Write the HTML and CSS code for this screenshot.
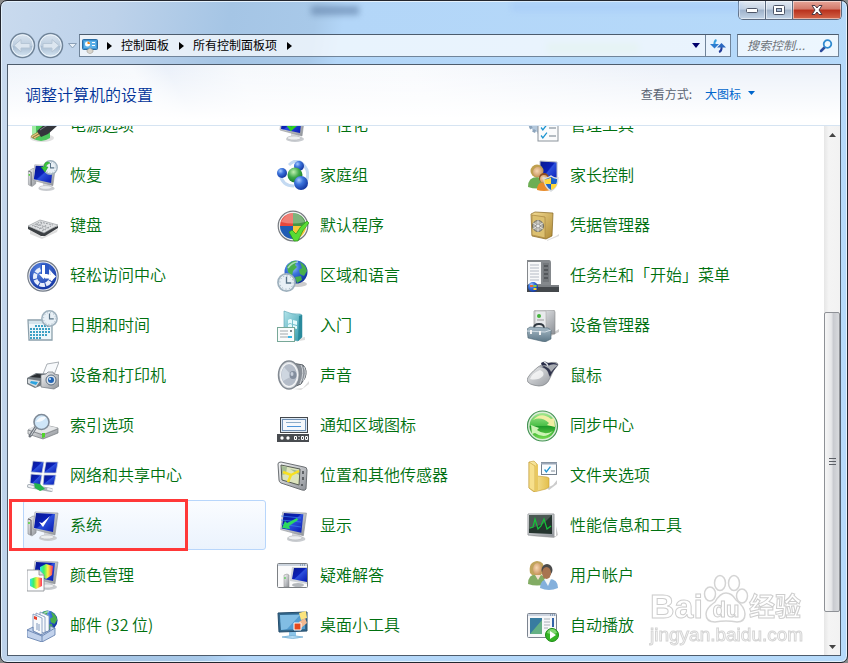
FILE: index.html
```html
<!DOCTYPE html>
<html lang="zh-CN">
<head>
	<meta charset="UTF-8">
	<title>所有控制面板项</title>
	<link rel="stylesheet" href="styles.css">
</head>
<body>
	<!-- 公用渐变和图形 -->
	<svg class="defs" width="0" height="0" aria-hidden="true">
		<defs>
			<linearGradient id="screen" x1="0" y1="0" x2="1" y2="1">
				<stop offset="0" stop-color="#0a1a8c"/><stop offset=".45" stop-color="#0a20b8"/><stop offset=".5" stop-color="#2c50dc"/><stop offset="1" stop-color="#0618b0"/>
			</linearGradient>
			<linearGradient id="silver" x1="0" y1="0" x2="1" y2="1">
				<stop offset="0" stop-color="#f6f7f8"/><stop offset="1" stop-color="#8c9096"/>
			</linearGradient>
			<linearGradient id="steel" x1="0" y1="0" x2="0" y2="1">
				<stop offset="0" stop-color="#a9bcc8"/><stop offset="1" stop-color="#5c7686"/>
			</linearGradient>
			<linearGradient id="gold" x1="0" y1="0" x2="1" y2="1">
				<stop offset="0" stop-color="#f3dc94"/><stop offset="1" stop-color="#b08a34"/>
			</linearGradient>
			<linearGradient id="folder" x1="0" y1="0" x2="1" y2="0">
				<stop offset="0" stop-color="#fbeeb0"/><stop offset="1" stop-color="#e3bf4c"/>
			</linearGradient>
			<linearGradient id="teal" x1="0" y1="0" x2="1" y2="1">
				<stop offset="0" stop-color="#b4e4ea"/><stop offset="1" stop-color="#2e98aa"/>
			</linearGradient>
			<linearGradient id="rainbow" x1="0" y1="0" x2="1" y2="0">
				<stop offset="0" stop-color="#30e0f0"/><stop offset=".3" stop-color="#40f060"/><stop offset=".6" stop-color="#fff040"/><stop offset="1" stop-color="#ff3060"/>
			</linearGradient>
			<linearGradient id="sync" x1="0" y1="0" x2="0" y2="1">
				<stop offset="0" stop-color="#a4e890"/><stop offset=".48" stop-color="#4cc048"/><stop offset=".5" stop-color="#1c9828"/><stop offset="1" stop-color="#74dc50"/>
			</linearGradient>
			<radialGradient id="blueBall" cx=".35" cy=".3" r=".75">
				<stop offset="0" stop-color="#a8ccff"/><stop offset=".4" stop-color="#3c74dc"/><stop offset="1" stop-color="#10329c"/>
			</radialGradient>
			<radialGradient id="greenBall" cx=".4" cy=".3" r=".75">
				<stop offset="0" stop-color="#c0f0b0"/><stop offset=".5" stop-color="#3ca848"/><stop offset="1" stop-color="#127424"/>
			</radialGradient>
			<radialGradient id="access" cx=".4" cy=".3" r=".8">
				<stop offset="0" stop-color="#5c8ae4"/><stop offset="1" stop-color="#0c2c9c"/>
			</radialGradient>
			<radialGradient id="skin" cx=".4" cy=".4" r=".7">
				<stop offset="0" stop-color="#f8d8b4"/><stop offset="1" stop-color="#c08850"/>
			</radialGradient>
			<linearGradient id="navBall" x1="0" y1="0" x2="0" y2="1">
				<stop offset="0" stop-color="#dbe6f1"/><stop offset=".5" stop-color="#bccddf"/><stop offset=".52" stop-color="#a5bad0"/><stop offset="1" stop-color="#dbeaf6"/>
			</linearGradient>
		</defs>
		<symbol id="monitor" viewBox="0 0 32 32">
			<ellipse cx="21" cy="28" rx="9" ry="3" fill="#c9ccd0"/>
			<path d="M17 21l8 2v5q-4 2-8 0z" fill="#d6d8db"/>
			<ellipse cx="20" cy="27" rx="7" ry="2" fill="#eceeef" stroke="#a8abb0" stroke-width=".5"/>
			<path d="M8 2l23 1-3 22-22-6z" fill="url(#silver)" stroke="#8e9298" stroke-width=".6"/>
			<path d="M9 3l19 1-2 18-19-4z" fill="url(#screen)"/>
		</symbol>
		<symbol id="pc" viewBox="0 0 32 32">
			<path d="M1 9l5-3 4 1-1 16-4 3-4-2z" fill="url(#silver)" stroke="#85898e" stroke-width=".6"/>
			<path d="M1 9l3 1v15" fill="none" stroke="#44484c" stroke-width=".8"/>
			<path d="M2 12v2" stroke="#4ad030" stroke-width="1.4"/>
			<use href="#monitor"/>
		</symbol>
		<symbol id="clock" viewBox="0 0 20 20">
			<circle cx="10" cy="10" r="9" fill="#e8f0f6" stroke="#9fb1be" stroke-width="1.8"/>
			<circle cx="10" cy="10" r="7" fill="none" stroke="#8ca0b0" stroke-width="1" stroke-dasharray="1 2.66"/>
			<path d="M10 4v6.500h5" fill="none" stroke="#5a7488" stroke-width="1.400"/>
		</symbol>
		<symbol id="globe" viewBox="0 0 24 24">
			<circle cx="12" cy="12" r="11.500" fill="url(#blueBall)"/>
			<path d="M3 6q5-6 10-5l-2 4 2 2-4 4-1 5-4-4zM16 2q6 3 7 9l-3 5-4-2-1-4 3-2zM11 17l6-1 1 4-5 3z" fill="#48b04c"/>
			<path d="M4 8q4-6 10-6" fill="none" stroke="#e4f8ff" stroke-width="1.500" opacity=".6"/>
		</symbol>
		<symbol id="tick" viewBox="0 0 12 12">
			<path d="M1 6l3 4 7-9" fill="none" stroke="#1c94d0" stroke-width="2.200"/>
		</symbol>
	</svg>

	<div class="window">
		<div class="ghost ghost_text"></div>
		<div class="ghost ghost_tab"></div>
		<div class="ghost ghost_green"></div>

		<div class="titlebar">
			<div class="controls">
				<button class="min" aria-label="最小化"><svg width="14" height="8" viewBox="0 0 14 8"><rect x="1.500" y="2.500" width="11" height="4" rx="1" fill="#fff" stroke="#4e5668"/></svg></button>
				<button class="max" aria-label="最大化"><svg width="14" height="12" viewBox="0 0 14 12"><rect x="1.500" y="1.500" width="11" height="9" rx="1" fill="#fff" stroke="#4e5668"/><rect x="4.500" y="4.500" width="5" height="3" fill="#a9bdd6" stroke="#4e5668"/></svg></button>
				<button class="close" aria-label="关闭"><svg width="14" height="12" viewBox="0 0 14 12"><path d="M2 1.500h3l2 2.500 2-2.500h3L9 6l3 4.500H9L7 8l-2 2.500H2L5 6z" fill="#fff" stroke="#4c3a44"/></svg></button>
			</div>
		</div>

		<div class="nav">
			<div class="history">
				<button aria-label="后退"><svg width="27" height="27" viewBox="0 0 27 27"><circle cx="13.500" cy="13.500" r="12" fill="url(#navBall)" stroke="#6f8398" stroke-width="1.500"/><circle cx="13.500" cy="13.500" r="10.700" fill="none" stroke="#eef5fb"/><path d="M5 13.500l7-6v4h9v4.500h-9v4z" fill="#dce6f0" stroke="#b6c6d6"/></svg></button>
				<button aria-label="前进"><svg width="27" height="27" viewBox="0 0 27 27"><circle cx="13.500" cy="13.500" r="12" fill="url(#navBall)" stroke="#6f8398" stroke-width="1.500"/><circle cx="13.500" cy="13.500" r="10.700" fill="none" stroke="#eef5fb"/><path d="M22 13.500l-7-6v4H6v4.500h9v4z" fill="#dce6f0" stroke="#b6c6d6"/></svg></button>
				<button class="recent" aria-label="最近页面"><svg width="9" height="6" viewBox="0 0 9 6"><path d="M.5.5h8l-4 4.500z" fill="#e8f0f8" stroke="#8ba0b8"/></svg></button>
			</div>
			<div class="address">
				<svg class="cp" width="16" height="16" viewBox="0 0 16 16">
					<rect x=".5" y="1.500" width="15" height="10" rx="1" fill="#3c94d4" stroke="#2a6ca4"/>
					<rect x="2" y="3" width="12" height="7" fill="#5cb0e8"/>
					<circle cx="5.500" cy="6" r="2.500" fill="#fff"/><path d="M5.500 6V3.500A2.500 2.500 0 0 1 8 6z" fill="#f08a20"/>
					<path d="M10 4.500h3M10 7.500h3" stroke="#fff"/>
					<path d="M5 12l3-2 3 2v2l-3 2-3-2z" fill="#d8d4cc" stroke="#96928a" stroke-width=".5"/>
				</svg>
				<svg class="sep" width="5" height="8" viewBox="0 0 5 8"><path d="M0 0l5 4-5 4z"/></svg>
				<a href="#">控制面板</a>
				<svg class="sep" width="5" height="8" viewBox="0 0 5 8"><path d="M0 0l5 4-5 4z"/></svg>
				<a href="#">所有控制面板项</a>
				<svg class="sep" width="5" height="8" viewBox="0 0 5 8"><path d="M0 0l5 4-5 4z"/></svg>
				<button class="drop" aria-label="以前的位置"><svg width="8" height="5" viewBox="0 0 8 5"><path d="M0 0h8L4 5z" fill="#00006c"/></svg></button>
				<button class="refresh" aria-label="刷新"><svg width="16" height="16" viewBox="0 0 16 16"><path d="M6.500 2Q4 3 4.500 7" fill="none" stroke="#36a0e0" stroke-width="2"/><path d="M0 6h9l-4.500 4.500z" fill="#2c7cd0"/><path d="M9 14q3-1 2.500-6" fill="none" stroke="#243c98" stroke-width="2"/><path d="M7 9.500h9L11.500 5z" fill="#2c68c0"/></svg></button>
			</div>
			<div class="search">
				<input type="text" placeholder="搜索控制..." aria-label="搜索控制面板">
				<svg width="14" height="14" viewBox="0 0 14 14"><path d="M6 8L2 12" stroke="#2c4c9c" stroke-width="2.500" stroke-linecap="round"/><circle cx="8.500" cy="5" r="3.800" fill="#eef8ff" stroke="#2f8ad0" stroke-width="1.800"/></svg>
			</div>
		</div>

		<div class="client">
			<div class="header">
				<h1>调整计算机的设置</h1>
				<div class="view">
					<label for="view">查看方式:</label>
					<select id="view">
						<option>大图标</option>
					</select>
					<svg width="7" height="4" viewBox="0 0 7 4"><path d="M0 0h7L3.500 4z" fill="#0066cc"/></svg>
				</div>
			</div>

			<div class="content">
				<div class="list">
					<a class="item" href="#">
						<svg viewBox="0 0 32 32"><ellipse cx="15" cy="28" rx="12" ry="4" fill="#ccc" opacity=".6"/><path d="M5 8h18v20q-9 6-18 0z" fill="#4cc85c"/><path d="M5 8h4v21l-4-1z" fill="#a0eca4"/><path d="M4 26l7-4 1 2-7 4zM7 29l7-4-1-2-7 4z" fill="#e8c880" stroke="#7a5a20" stroke-width=".5"/><path d="M10 21l7-6 13-5v6l-9 8-7 3z" fill="#34363c"/><path d="M13 20l6-4 9-3" stroke="#84888e" fill="none"/></svg>
						<span>电源选项</span>
					</a>
					<a class="item" href="#">
						<svg viewBox="0 0 32 32"><use href="#monitor" x="-3" y="1"/><path d="M7 10l7 9 6-5" stroke="#30d020" stroke-width="3" fill="none"/></svg>
						<span>个性化</span>
					</a>
					<a class="item" href="#">
						<svg viewBox="0 0 32 32"><circle cx="11" cy="14" r="8" fill="#b4c8dc" stroke="#8ca4bc" stroke-width="3" stroke-dasharray="3 2"/><rect x="11" y="5" width="20" height="26" fill="#fafbfc" stroke="#8c949c"/><use href="#tick" x="13" y="14" width="8" height="7"/><use href="#tick" x="13" y="22" width="8" height="7"/><path d="M22 18h7M22 26h7" stroke="#6e7c88"/></svg>
						<span>管理工具</span>
					</a>

					<a class="item" href="#">
						<svg viewBox="0 0 32 32"><use href="#pc" y="3" width="30" height="29"/><use href="#clock" x="16" y="0" width="15" height="15"/><path d="M21 2q-4 0-4 5h-3l4 5 3-5h-2q0-3 4-4z" fill="#3cc83c" stroke="#189020" stroke-width=".5"/></svg>
						<span>恢复</span>
					</a>
					<a class="item" href="#">
						<svg viewBox="0 0 32 32"><path d="M12 5Q22-5 30 10q2 8-2 14M3 14q2 12 14 12" fill="none" stroke="#c4daf2" stroke-width="3"/><circle cx="22" cy="6" r="5" fill="url(#blueBall)"/><circle cx="5" cy="13" r="5" fill="url(#blueBall)"/><circle cx="18" cy="15" r="7.500" fill="url(#greenBall)"/><circle cx="24" cy="23" r="7" fill="url(#blueBall)"/></svg>
						<span>家庭组</span>
					</a>
					<a class="item" href="#">
						<svg viewBox="0 0 32 32"><path d="M13 1l17 1v20l-17-2z" fill="url(#screen)" stroke="#b8bcc4"/><path d="M1 27q0-10 9-10t9 10q-9 3-18 0z" fill="#6cae54"/><circle cx="10" cy="11" r="6.500" fill="#c0a050"/><circle cx="11" cy="12" r="5" fill="url(#skin)"/><path d="M10 30q0-8 7-8t7 8q-7 2-14 0z" fill="#e88c2c"/><circle cx="17" cy="18" r="5" fill="#8e4c20"/><circle cx="17" cy="19" r="4" fill="url(#skin)"/><path d="M24 16q4 3 7 2 0 9-7 13-7-4-7-13 3 1 7-2z" fill="#1c64cc" stroke="#d8dce0" stroke-width="1.500"/><path d="M24 24h6q-1 4-6 6zM24 24h-6q-1-2-.5-5 3 1 6.500-1.500z" fill="#ffd83c"/></svg>
						<span>家长控制</span>
					</a>

					<a class="item" href="#">
						<svg viewBox="0 0 32 32"><path d="M3 20l12 7 16-8-1 3-15 7L3 24z" fill="#bbb" opacity=".5"/><path d="M1 16l14 6 16-6v2l-13 8-4 0L1 19z" fill="#3c4044"/><path d="M1 16l12-6 18 5-14 8z" fill="#dfe1e3" stroke="#8a8e92" stroke-width=".6"/><path d="M5 16l8-4 13 3M8 17l8-4M12 19l8-4M15 21l9-5M9 14l13 4M7 16l12 4" stroke="#9a9ea2" stroke-dasharray="2 1" fill="none"/></svg>
						<span>键盘</span>
					</a>
					<a class="item" href="#">
						<svg viewBox="0 0 32 32"><circle cx="16" cy="16" r="14.800" fill="#f0f1f2" stroke="#777b80" stroke-width="1.200"/><path d="M16 16H3A13 13 0 0 1 16 3z" fill="#e8483c"/><path d="M16 16V3A13 13 0 0 1 29 16z" fill="#469444"/><path d="M16 16V29A13 13 0 0 1 3 16z" fill="#205cb4"/><path d="M16 16V29A13 13 0 0 0 29 16z" fill="#f8c838"/><path d="M4 12q5-9 12-9t12 9q-12 3-24 0z" fill="#fff" opacity=".3"/><path d="M12 22l3-2 4 4q4-8 11-13l2 2q-7 7-11 18h-4z" fill="#58dc34" stroke="#289018" stroke-width=".7"/></svg>
						<span>默认程序</span>
					</a>
					<a class="item" href="#">
						<svg viewBox="0 0 32 32"><path d="M20 30l9-4 3-2v2l-12 5z" fill="#ddd"/><path d="M4 4l4-2 18 1-1 23-6 3L5 26z" fill="url(#gold)" stroke="#846420" stroke-width=".7"/><path d="M5 5l13 2v21L5 25z" fill="#dcc070" stroke="#a68440" stroke-width=".7"/><circle cx="11" cy="16" r="5.500" fill="#b4b2a8" stroke="#6c6a60"/><circle cx="11" cy="16" r="2" fill="#e4e4e0" stroke="#666"/><path d="M11 10v12M6 13l10 6M6 19l10-6" stroke="#eee" stroke-width=".8"/></svg>
						<span>凭据管理器</span>
					</a>

					<a class="item" href="#">
						<svg viewBox="0 0 32 32"><circle cx="16" cy="16" r="15.200" fill="#f0f2f4" stroke="#747c88" stroke-width="1.200"/><circle cx="16" cy="16" r="13.500" fill="url(#access)"/><circle cx="16" cy="17" r="8" fill="none" stroke="#e8eefc" stroke-width="4" stroke-dasharray="5.300 1" stroke-dashoffset="2"/><path d="M14 4h8v11h-8z" fill="#2c58c4"/><path d="M15 5h3v9h3l-4.500 5L12 14h3z" fill="#fff"/><path d="M18 14.500h6v-3l5 5-5 5v-3h-6z" fill="#fff"/></svg>
						<span>轻松访问中心</span>
					</a>
					<a class="item" href="#">
						<svg viewBox="0 0 32 32"><ellipse cx="21" cy="24" rx="9" ry="3" fill="#ccc"/><use href="#globe" x="7" y="0" width="24" height="24"/><use href="#clock" x="0" y="13" width="19" height="19"/></svg>
						<span>区域和语言</span>
					</a>
					<a class="item" href="#">
						<svg viewBox="0 0 32 32"><path d="M0 0h22q2 0 2 3v22H0z" fill="#84888c"/><rect x="1" y="2" width="13" height="22" fill="#f8f9fa"/><path d="M3 5h9M3 8h9M3 11h9M3 14h9M3 17h9M3 20h9" stroke="#b4bac4"/><path d="M16 3h6v19h-6z" fill="#74787c"/><path d="M17 6h4M17 10h4M17 14h4M17 18h4" stroke="#54585c" stroke-width="2"/><path d="M0 25h32v7H0z" fill="#44484c"/><path d="M10 25h22v2H10z" fill="#7c8084"/><circle cx="6" cy="27" r="5" fill="url(#blueBall)"/><path d="M3 25h3v2H3z" fill="#f06830"/><path d="M6.500 25h3v2h-3z" fill="#80d040"/><path d="M6.500 28h3v2h-3z" fill="#ffd030"/></svg>
						<span>任务栏和「开始」菜单</span>
					</a>

					<a class="item" href="#">
						<svg viewBox="0 0 32 32"><path d="M1 10h24v20H2z" fill="#eef6fa" stroke="#8ca0ac" stroke-width="1.300"/><path d="M2 11h22v3H2z" fill="#d4e4ec"/><path d="M8 16h15M3 19h20M3 22h20M3 25h17M3 28h11" stroke="#3ca0c4" stroke-width="2" stroke-dasharray="2 1"/><use href="#clock" x="14" y="0" width="17" height="17"/></svg>
						<span>日期和时间</span>
					</a>
					<a class="item" href="#">
						<svg viewBox="0 0 32 32"><path d="M23 28l5-1v3l-6 1z" fill="#ddd"/><path d="M7 1q8 4 16 3l2 1v22l-4 4-14-3z" fill="url(#teal)" stroke="#50a0b0" stroke-width=".6"/><path d="M22 6l3-1v22l-4 4z" fill="#2a8a9c"/><path d="M11 10q3-2 4 0v4q-2-2-4 0zM16 10l4 1v4l-4-1zM11 15q3-2 4 0v3q-2-2-4 0zM16 15l4 1v3l-4-1z" fill="#e4fafc"/><rect x=".5" y="17.500" width="17" height="14" fill="#fafcfc" stroke="#78a898"/><path d="M3 21h8M3 24h8M3 27h8" stroke="#a0a8ac"/><path d="M11 27h4" stroke="#38b4e4" stroke-width="2"/><path d="M13 21h2" stroke="#7c8890" stroke-width="2"/></svg>
						<span>入门</span>
					</a>
					<a class="item" href="#">
						<svg viewBox="0 0 32 32"><path d="M24 24l8-5v3l-8 4z" fill="#ccc"/><path d="M7 1l2-1h18l1 2v22H7z" fill="url(#silver)" stroke="#888" stroke-width=".6"/><path d="M8 1h11v22H8z" fill="#e8eaec" stroke="#aaa" stroke-width=".6"/><circle cx="12" cy="6" r="2" fill="#44b43c"/><path d="M10 10h7" stroke="#999"/><path d="M7 18q0-4 5-4t5 4" fill="none" stroke="#303840" stroke-width="1.800"/><path d="M0 19l3-2 18 1 3 2v9l-6 3L1 28z" fill="url(#steel)" stroke="#4c6472" stroke-width=".6"/><path d="M0 21l18 1 6-2" stroke="#d0dce4" fill="none"/><path d="M4 20v4M13 21v4" stroke="#f4f4f4" stroke-width="2"/></svg>
						<span>设备管理器</span>
					</a>

					<a class="item" href="#">
						<svg viewBox="0 0 32 32"><path d="M16 14L20 4l12-2-5 13z" fill="#f8fafc" stroke="#969ca2" stroke-width=".8"/><path d="M0 18l9-5 14 1-5 10-10 4-8-4z" fill="#747c82"/><path d="M3 17l7-3 10 1-5 3z" fill="#292d31"/><path d="M1 19l12 2-4 6-8-4z" fill="#d7dce0"/><path d="M4 21l7 1-2 3-6-2z" fill="#2ca4e0"/><path d="M14 15l5-1 2-2h5l1 2 5 1v11l-5 3-13-2z" fill="url(#silver)" stroke="#6e757c" stroke-width=".7"/><circle cx="24" cy="20" r="5" fill="#dfe6ec" stroke="#5c6e80"/><circle cx="24" cy="20" r="3" fill="#2464b4"/><circle cx="23" cy="19" r="1" fill="#c8f0ff"/></svg>
						<span>设备和打印机</span>
					</a>
					<a class="item" href="#">
						<svg viewBox="0 0 32 32"><path d="M16 29l10-1 6-7v3l-8 6z" fill="#ddd"/><path d="M15 3l11 2q5 5 2 13l-4 6-10 4z" fill="#8a9098" stroke="#5c6268"/><path d="M24 5q4 7-1 19M27 7q3 6-1 14" stroke="#d0d4d8" fill="none"/><ellipse cx="12" cy="15" rx="10.500" ry="14" fill="#d7dbe0" stroke="#838a92" stroke-width="1.500"/><ellipse cx="12" cy="15" rx="8.500" ry="11.500" fill="#b4bcc8" stroke="#f4f5f6" stroke-width="1.200"/><path d="M15 16L7 7q-4 7-1 14z" fill="#ced6e0"/><ellipse cx="16" cy="15" rx="3.500" ry="4" fill="#838e9e"/><ellipse cx="15" cy="14" rx="1.500" ry="2" fill="#c8d0dc"/></svg>
						<span>声音</span>
					</a>
					<a class="item" href="#">
						<svg viewBox="0 0 32 32"><path d="M0 20q1-5 11-13 5-4 11-4 9-2 9 2-5 5-8 13-3 8-11 8-11-1-12-6z" fill="url(#silver)" stroke="#777b80" stroke-width=".7"/><path d="M14 3q4-3 7 0 8-1 10 2-6 4-9 9-1-6-7-8z" fill="#282c48"/><path d="M11 7q10 1 11 9 4-7 9-11-6-2-10 1-4-2-10 1z" fill="#a8acb2"/><path d="M22 15q-1-6-7-8l2-1q6 2 7 6 3-4 7-7-6 7-8 12z" fill="#30344c"/><path d="M17 2q3 1 4 4" stroke="#d8dce0" fill="none" stroke-width="1.500"/><path d="M3 19q2-6 10-9 5 2 3 6-5 5-13 3z" fill="#fff" opacity=".7"/></svg>
						<span>鼠标</span>
					</a>

					<a class="item" href="#">
						<svg viewBox="0 0 32 32"><path d="M1 20l12-6 18 4v5l-15 6-15-5z" fill="url(#silver)" stroke="#777b80" stroke-width=".7"/><path d="M1 19l12-5 18 4-15 6z" fill="#e4e6e8"/><path d="M1 20l15 5v4M16 25l15-6" stroke="#8c9094" fill="none"/><path d="M15 23h3v4l-3 1z" fill="#50d428"/><path d="M9 17l-6 9" stroke="#6e747c" stroke-width="3" stroke-linecap="round"/><path d="M9 17l-5 8" stroke="#d4d8dc" stroke-linecap="round"/><circle cx="14.500" cy="12" r="7.500" fill="#cfe6f8" stroke="#7f8b98" stroke-width="1.600"/><path d="M9 12q3-6 10-5-2 5-10 5z" fill="#fff" opacity=".8"/></svg>
						<span>索引选项</span>
					</a>
					<a class="item" href="#">
						<svg viewBox="0 0 32 32"><rect x="3.500" y="7.500" width="27" height="15" fill="#dce8f4" stroke="#44484c"/><rect x="5.500" y="9.500" width="23" height="11" fill="#f4f8fc" stroke="#7090b4"/><path d="M9 12.500h15" stroke="#8cacc8"/><path d="M10 16.500h14" stroke="#4c94d8"/><path d="M0 24h32v8H0z" fill="#484c50"/><circle cx="5" cy="28" r="1.700" fill="#fff"/><circle cx="11" cy="28" r="1.700" fill="#fff"/><path d="M17.500 26.500h2v3h-2zM24.500 26.500h2v3h-2zM28.500 26.500h2v3h-2zM22 26v1M22 29v1" stroke="#fff" fill="none"/></svg>
						<span>通知区域图标</span>
					</a>
					<a class="item" href="#">
						<svg viewBox="0 0 32 32"><circle cx="15.500" cy="16" r="15" fill="#dcecd8" stroke="#449454" stroke-width="1.200"/><circle cx="15.500" cy="16" r="13" fill="url(#sync)"/><path d="M6 10Q14 1 24 9l3-1 1 9-8-2 2-2Q14 6 6 10z" fill="#f0eea4"/><path d="M26 21Q18 30 8 23l-3 1-1-9 8 3-2 2q8 6 16 1z" fill="#ccf4b4"/></svg>
						<span>同步中心</span>
					</a>

					<a class="item" href="#">
						<svg viewBox="0 0 32 32"><g fill="url(#screen)" stroke="#c8d0dc" stroke-width=".8"><path d="M6 1l11 1-2 11-11-1z"/><path d="M19 2h12l-2 11H17z"/><path d="M4 14l11 1-2 11-10-3z"/><path d="M17 15h12l-2 10H16z"/></g><path d="M2 26l22 4" stroke="#a8b0b8" stroke-width="4" stroke-linecap="round"/><path d="M2 26l4 1M21 29l4 1" stroke="#f0f2f4" stroke-width="2" stroke-linecap="round"/><path d="M7 23l6 1 5 5-5 2-5-3z" fill="#24b44c"/></svg>
						<span>网络和共享中心</span>
					</a>
					<a class="item" href="#">
						<svg viewBox="0 0 32 32"><path d="M1 4q0-2 3-2l23 5q3 0 3 3l-1 19q-1 2-4 1L4 23q-2-1-2-3z" fill="url(#silver)" stroke="#6c7074"/><path d="M4 5l19 4-1 16-17-5z" fill="#dce4bc" stroke="#565c54"/><path d="M5 6l5 1-1 7-4 1zM13 9l9 2v4z" fill="#a4bc94"/><path d="M6 12l8 3 8-4M14 15l-3 7" stroke="#f8e020" stroke-width="2.500" fill="none"/><path d="M26 11v3M26 17v3M25 24v2" stroke="#44484c" stroke-width="1.500"/></svg>
						<span>位置和其他传感器</span>
					</a>
					<a class="item" href="#">
						<svg viewBox="0 0 32 32"><path d="M20 28l6-3 4-5v4l-8 6z" fill="#ccc"/><path d="M2 2l5-1 3 3v12l10 1 2 1v9l-3 2-8 2-4 1-5-4z" fill="url(#folder)" stroke="#c49c34" stroke-width=".6"/><path d="M2 2l6 4v26l-6-4z" fill="#f7e08c" stroke="#c49c34" stroke-width=".6"/><path d="M8 6l3-2v26l-3 2z" fill="#e8c860"/><rect x="14.500" y="2.500" width="15" height="12" fill="#fafcfe" stroke="#74808c"/><path d="M14 3.500h16" stroke="#9ca8b8" stroke-width="2"/><use href="#tick" x="17" y="6" width="7" height="7"/><path d="M24 11h4" stroke="#84909c"/></svg>
						<span>文件夹选项</span>
					</a>

					<a class="item current" href="#">
						<svg viewBox="0 0 32 32"><use href="#pc"/><path d="M12 12l4 5 7-11-8 7z" fill="#fff"/></svg>
						<span>系统</span>
						<i class="mark"></i>
					</a>
					<a class="item" href="#">
						<svg viewBox="0 0 32 32"><use href="#monitor" x="-3" width="34" height="33"/><path d="M4 6l20 2M4 10l20 2M4 14l20 3" stroke="#3c80f0" opacity=".7"/><path d="M5 18l3-7 2 2 10-5 1 2-9 6 1 3z" fill="#2cd860"/></svg>
						<span>显示</span>
					</a>
					<a class="item" href="#">
						<svg viewBox="0 0 32 32"><path d="M3 26h26V16l2 9-4 3z" fill="#ccc"/><path d="M1 4h26v23L1 25z" fill="url(#silver)" stroke="#9c9fa2"/><path d="M2 5h23v19L2 23z" fill="#24342e"/><path d="M2 5h23l-9 9-14 5z" fill="#fff" opacity=".18"/><path d="M3 18l3-1 2-8 3 10 3-3 3-7 3 10 4-3" stroke="#14c438" fill="none" stroke-width="1.200"/></svg>
						<span>性能信息和工具</span>
					</a>

					<a class="item" href="#">
						<svg viewBox="0 0 32 32"><use href="#monitor" x="0" y="-1"/><path d="M13 7l6-3 7 2-1 9-6 4-6-4z" fill="url(#rainbow)"/><path d="M0 10h12l5 5v16H0z" fill="#fcfcfd" stroke="#84888e" stroke-width=".8"/><path d="M12 10v5h5" fill="#dde0e4" stroke="#84888e" stroke-width=".8"/><path d="M3 19l6-2 6 1v8l-6 3-6-3z" fill="url(#rainbow)"/></svg>
						<span>颜色管理</span>
					</a>
					<a class="item" href="#">
						<svg viewBox="0 0 32 32"><rect x=".5" y="3.500" width="30" height="24" rx="1" fill="#fafafb" stroke="#7c8084"/><path d="M1 5h29" stroke="#ccd4de" stroke-width="2"/><path d="M23 5h6" stroke="#54789c" stroke-dasharray="1 1"/><path d="M7 15l3-1 2 1v12H7z" fill="url(#silver)" stroke="#888" stroke-width=".5"/><path d="M8 17v2" stroke="#3c3"/><path d="M15 7h15v17l-17-3z" fill="#d0d4d8"/><path d="M17 8h13v14l-15-3z" fill="url(#screen)"/><ellipse cx="21" cy="25" rx="6" ry="2" fill="#b4b8bc"/></svg>
						<span>疑难解答</span>
					</a>
					<a class="item" href="#">
						<svg viewBox="0 0 32 32"><path d="M1 24q0-10 9-10t9 10q-9 3-18 0z" fill="#82ac64"/><path d="M3 13Q1 2 10 1q8 0 7 10l-3 4H5z" fill="#c0a45c"/><ellipse cx="10.500" cy="9" rx="4.500" ry="6" fill="url(#skin)"/><path d="M8 15l3 5 3-5z" fill="#f4e0cc"/><path d="M13 28q0-9 9-9t9 9q-9 4-18 0z" fill="#84b0dc"/><ellipse cx="20" cy="10" rx="5.500" ry="6" fill="#4a4a4a"/><ellipse cx="19.500" cy="13" rx="4.500" ry="6" fill="#a87450"/><path d="M17 19l4 7 3-7z" fill="#f4f6f8"/></svg>
						<span>用户帐户</span>
					</a>

					<a class="item" href="#">
						<svg viewBox="0 0 32 32"><use href="#globe" x="10" y="0" width="21" height="21"/><g fill="#f8fafd" stroke="#7a92b8" stroke-width=".8"><path d="M13 2l9 4v16l-9-2z"/><path d="M9 3l9 4v16l-9-2z"/><path d="M6 4l9 4v17l-9-4z"/></g><path d="M7 6l3 1v3L7 9z" fill="#e8402c"/><path d="M10 13v7M12 14v7" stroke="#8098bc"/><path d="M0 20l6-3v4l8 4 9-5v-4l5 2v7l-13 7L0 27z" fill="#c2d2ec" stroke="#5c78a8" stroke-width=".8"/><path d="M0 20l15 6 13-8M15 26v6" fill="none" stroke="#5c78a8" stroke-width=".8"/></svg>
						<span>邮件 (32 位)</span>
					</a>
					<a class="item" href="#">
						<svg viewBox="0 0 32 32"><path d="M12 22h7v5h-7z" fill="#8cc4e8"/><path d="M5 27q10-3 21 0-10 3-21 0z" fill="#b4dcf4" stroke="#6ca8d0" stroke-width=".7"/><path d="M1 3l29-1v19L2 22z" fill="#34688c" stroke="#244c6c"/><path d="M3 5l25-1v15L4 20z" fill="#549cd0"/><path d="M3 5h20L10 19l-6 1z" fill="#94ccec" opacity=".7"/><path d="M22 3l7-2 1 7-6 2z" fill="#fce47c"/><path d="M22 12l6-4 2 5-6 5z" fill="#f4b890"/><path d="M17 13h7v7h-7z" fill="#e4481c" stroke="#fff"/></svg>
						<span>桌面小工具</span>
					</a>
					<a class="item" href="#">
						<svg viewBox="0 0 32 32"><rect x=".5" y="3.500" width="29" height="24" rx="1" fill="#f6f7f9" stroke="#7c8490"/><path d="M1 5h28" stroke="#ccd4e0" stroke-width="2"/><path d="M23 5h6" stroke="#4c6c94" stroke-dasharray="1 1"/><path d="M3 8h12v16H3z" fill="#387ca0"/><path d="M3 24l12-14v14z" fill="#64b084"/><path d="M17 9h6M17 12h6M17 15h6M17 18h4" stroke="#a8b0b8"/><path d="M26 8v9" stroke="#3464a8" stroke-width="2"/><circle cx="25" cy="25" r="6.500" fill="#34b424" stroke="#1c8c14"/><path d="M20 23q1-4 5-4t5 4q-5 2-10 0z" fill="#b0eca0" opacity=".6"/><path d="M23 21l6 4-6 4z" fill="#fff"/></svg>
						<span>自动播放</span>
					</a>
				</div>

				<div class="scrollbar">
					<button aria-label="向上滚动"><svg width="7" height="4" viewBox="0 0 7 4"><path d="M0 4h7L3.500 0z" fill="#444"/></svg></button>
					<div class="track">
						<div class="thumb"><i></i><i></i><i></i></div>
					</div>
					<button aria-label="向下滚动"><svg width="7" height="4" viewBox="0 0 7 4"><path d="M0 0h7L3.500 4z" fill="#444"/></svg></button>
				</div>
			</div>
		</div>

		<div class="watermark">
			<div class="brand">
				<span class="bai">Bai</span>
				<span class="paw">
					<svg width="46" height="49" viewBox="0 0 46 49"><g fill="#fff" stroke="#d0d0d0" stroke-width="1.500"><ellipse cx="7" cy="20" rx="5.500" ry="7"/><ellipse cx="17" cy="9" rx="5.500" ry="7.500"/><ellipse cx="31" cy="9" rx="5.500" ry="7.500"/><ellipse cx="39" cy="22" rx="5.500" ry="7"/><path d="M23 19q6 0 10 7 9 7 9 14 0 8-8 8-11-2-22 0-9 0-9-8 0-6 9-12 5-9 11-9z"/></g></svg>
					<b>du</b>
				</span>
				<span class="jy">经验</span>
			</div>
			<div class="url">jingyan.baidu.com</div>
		</div>
	</div>
</body>
</html>
```
FILE: styles.css
```css
*{padding:0;margin:0;box-sizing:border-box;}
body{
	background:#8a8a8a;
	font-family:"Noto Sans CJK SC","Liberation Sans",sans-serif;
	font-size:12px;
	color:#000;
}
button{
	border:0;
	background:none;
	display:flex;
	align-items:center;
	justify-content:center;
	cursor:pointer;
}
svg{
	display:block;
	flex:none;
}
a{
	text-decoration:none;
	color:inherit;
}
.defs{
	position:absolute;
}
.window{
	position:relative;
	height:100vh;
	display:flex;
	flex-direction:column;
	overflow:hidden;
	border:1px solid #23262e;
	border-radius:7px;
	background:linear-gradient(100deg,#c9daee 0,#bdd2ea 12%,#a5c5e5 24%,#a8c9e9 33%,#b3d6f8 36%,#b6dafa 100%);
	box-shadow:inset 0 0 0 1px #e4f1fc;
}

/* 玻璃后面透出的内容 */
.ghost{
	position:absolute;
	filter:blur(3px);
}
.ghost_text{
	left:310px;
	top:5px;
	width:48px;
	height:9px;
	background:#5c7ca4;
	opacity:.6;
}
.ghost_tab{
	left:510px;
	top:2px;
	width:230px;
	height:8px;
	background:#a4c8f8;
	opacity:.6;
}
.ghost_green{
	left:546px;
	top:42px;
	width:92px;
	height:10px;
	background:#a0d8b8;
	opacity:.5;
}

.titlebar{
	display:flex;
	justify-content:flex-end;
	padding-right:5px;
}
.controls{
	display:flex;
	height:19px;
	border:1px solid #5c6b80;
	border-top:0;
	border-radius:0 0 5px 5px;
	overflow:hidden;
}
.controls button{
	width:27px;
	border-right:1px solid #5c6b80;
	box-shadow:inset 0 0 0 1px rgba(255,255,255,.5);
	background:linear-gradient(#e2eaf4 0,#c5d2e2 45%,#9fb1c8 50%,#c3d5e8 100%);
}
.controls .close{
	width:48px;
	border-right:0;
	background:linear-gradient(#e6a698 0,#d2796a 45%,#b8301c 50%,#d4664a 100%);
}

.nav{
	display:flex;
	align-items:center;
	height:25px;
	margin:13px 8px 6px 8px;
	position:relative;
}
.history{
	display:flex;
	align-items:center;
	gap:1px;
}
.recent{
	width:14px;
	height:20px;
}
.address{
	flex:1;
	display:flex;
	align-items:center;
	height:23px;
	border:1px solid #70849a;
	border-top-color:#4c5c6e;
	background:rgba(255,255,255,.7);
	padding-left:2px;
}
.address a{
	line-height:20px;
	padding-bottom:2px;
}
.cp{
	margin-right:9px;
}
.sep{
	margin-right:9px;
}
.address a + .sep{
	margin-left:10px;
}
.drop{
	width:18px;
	height:21px;
	margin-left:auto;
}
.refresh{
	width:25px;
	height:21px;
	border-left:1px solid #70849a;
}
.search{
	display:flex;
	align-items:center;
	width:102px;
	height:23px;
	margin-left:6px;
	padding:0 5px 0 9px;
	border:1px solid #70849a;
	border-top-color:#4c5c6e;
	background:rgba(255,255,255,.75);
}
.search input{
	flex:1;
	min-width:0;
	border:0;
	outline:0;
	background:none;
	padding-bottom:2px;
	font:italic 12px "Noto Sans CJK SC",sans-serif;
}
.search input::placeholder{
	color:#6c7278;
}

.client{
	flex:1;
	min-height:0;
	display:flex;
	flex-direction:column;
	margin:0 6px 6px;
	border:1px solid #4e5c6c;
	background:#fff;
}
.header{
	display:flex;
	align-items:center;
	justify-content:space-between;
	height:61px;
	padding:0 85px 2px 17px;
	border-bottom:1px solid #d6e4f2;
	background:linear-gradient(rgba(255,255,255,0),#fff 90%),linear-gradient(60deg,#eef3fa 0,#f6f9fd 18%,#eaf0f9 22%,#f5f8fc 30%,#f8fafd 50%,#ecf1f9 80%);
}
h1{
	font-size:16px;
	font-weight:350;
	color:#003399;
}
.view{
	display:flex;
	align-items:center;
	padding-bottom:2px;
	color:#5a6472;
}
.view select{
	appearance:none;
	border:0;
	background:none;
	margin:0 6px 0 13px;
	font:12px "Noto Sans CJK SC",sans-serif;
	color:#0066cc;
}

.content{
	flex:1;
	min-height:0;
	display:flex;
}
/* 列表滚动到底部，上面的一行被裁掉 */
.list{
	flex:1;
	display:grid;
	grid-template-columns:repeat(auto-fill,243px);
	grid-auto-rows:50px;
	column-gap:7px;
	align-content:end;
	overflow:hidden;
	padding:0 0 5px 15px;
}
.item{
	position:relative;
	display:flex;
	align-items:center;
	gap:11px;
	padding:1px 3px 0;
	border:1px solid transparent;
	border-radius:3px;
	font-size:16px;
	font-weight:350;
	line-height:24px;
	color:#00700f;
}
.item svg{
	width:32px;
	height:32px;
}
.item span{
	padding-bottom:4px;
}
.current{
	border-color:#b8d6fb;
	background:linear-gradient(#fafcff,#ebf3fd);
}
.mark{
	position:absolute;
	left:-15px;
	top:-2px;
	width:179px;
	height:52px;
	border:3px solid #ff3838;
}

.scrollbar{
	width:16px;
	display:flex;
	flex-direction:column;
	background:linear-gradient(90deg,#e6e6e6,#f4f4f4 30%,#f2f2f2);
}
.scrollbar button{
	height:17px;
}
.track{
	flex:1;
	display:flex;
	flex-direction:column;
	justify-content:flex-end;
	padding-bottom:26px;
}
.thumb{
	height:64%;
	display:flex;
	flex-direction:column;
	align-items:center;
	justify-content:center;
	gap:2px;
	border:1px solid #8e9196;
	border-radius:2px;
	background:linear-gradient(90deg,#f6f6f6,#e6e7e9 45%,#c9cbd0 60%,#d8dadd);
}
.thumb i{
	width:7px;
	height:1px;
	background:#5c6066;
}

.watermark{
	position:absolute;
	right:41px;
	bottom:15px;
	width:156px;
	font-family:"Liberation Sans","Noto Sans CJK SC",sans-serif;
	color:#fff;
	opacity:.9;
}
.brand{
	display:flex;
	align-items:flex-end;
	height:50px;
	-webkit-text-stroke:1px #c8c8c8;
}
.bai{
	font-size:34px;
	line-height:34px;
	font-weight:700;
}
.paw{
	position:relative;
}
.paw b{
	position:absolute;
	left:0;
	right:0;
	bottom:2px;
	text-align:center;
	font-size:22px;
	line-height:22px;
}
.jy{
	font-size:26px;
	line-height:32px;
	font-weight:700;
}
.url{
	font-size:19px;
	line-height:24px;
	-webkit-text-stroke:1px #d0d0d0;
}
```
